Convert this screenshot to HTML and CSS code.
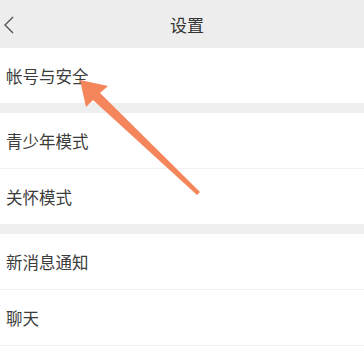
FILE: index.html
```html
<!DOCTYPE html>
<html lang="zh-CN">

<head>
    <meta charset="UTF-8">
    <meta name="viewport" content="width=device-width, initial-scale=1.0">
    <title>设置</title>
    <link rel="stylesheet" href="styles.css">
</head>

<body>
    <div class="page">
        <div class="topbar">
            <span class="back">
                <svg width="12" height="18" viewBox="0 0 12 18">
                    <path d="M10 1 L2 9 L10 17" fill="none" stroke="#555" stroke-width="1.4" />
                </svg>
            </span>
            <span class="title">设置</span>
        </div>

        <ul class="group">
            <li>帐号与安全<i class="more"></i></li>
        </ul>
        <ul class="group">
            <li>青少年模式<i class="more"></i></li>
            <li>关怀模式<i class="more"></i></li>
        </ul>
        <ul class="group">
            <li>新消息通知<i class="more"></i></li>
            <li>聊天<i class="more"></i></li>
        </ul>

        <!-- 标注箭头 -->
        <svg class="arrow" width="364" height="360" viewBox="0 0 364 360">
            <polygon points="200,192 197,195 93,100 86,107 80,80 108,86 100,93" fill="#f5865c" />
        </svg>
    </div>
</body>

</html>
```

FILE: styles.css
```css
* {
    margin: 0;
    padding: 0;
}

ul,
li {
    list-style: none;
}

body {
    background-color: #fff;
    font-family: "Noto Sans CJK SC", "Noto Sans", sans-serif;
    color: #333;
    overflow: hidden;
}

.page {
    position: relative;
    width: 364px;
    height: 360px;
    overflow: hidden;
}

.topbar {
    height: 48px;
    background-color: #ededed;
    display: flex;
    align-items: center;
    justify-content: center;
    padding-left: 10px;
    position: relative;
}

.back {
    position: absolute;
    left: 3px;
    top: 16px;
    display: flex;
}

.title {
    font-size: 17px;
    color: #333;
}

.group {
    background-color: #fff;
    border-top: 10px solid #efefef;
}

.group:first-of-type {
    border-top: 0;
}

.group>li {
    height: 55px;
    display: flex;
    align-items: center;
    justify-content: space-between;
    padding-left: 6px;
    font-size: 16.5px;
    color: #3c3c3c;
    border-bottom: 1px solid #f1f1f1;
}

.group>li:last-child {
    border-bottom: 0;
}

.group:last-of-type>li:last-child {
    border-bottom: 1px solid #f1f1f1;
}

/* 右侧箭头，只露出一点 */
.more {
    width: 8px;
    height: 8px;
    border-top: 1px solid #cfcfcf;
    border-right: 1px solid #cfcfcf;
    transform: rotate(45deg);
    margin-right: -5px;
}

.arrow {
    position: absolute;
    left: 0;
    top: 0;
}
```
